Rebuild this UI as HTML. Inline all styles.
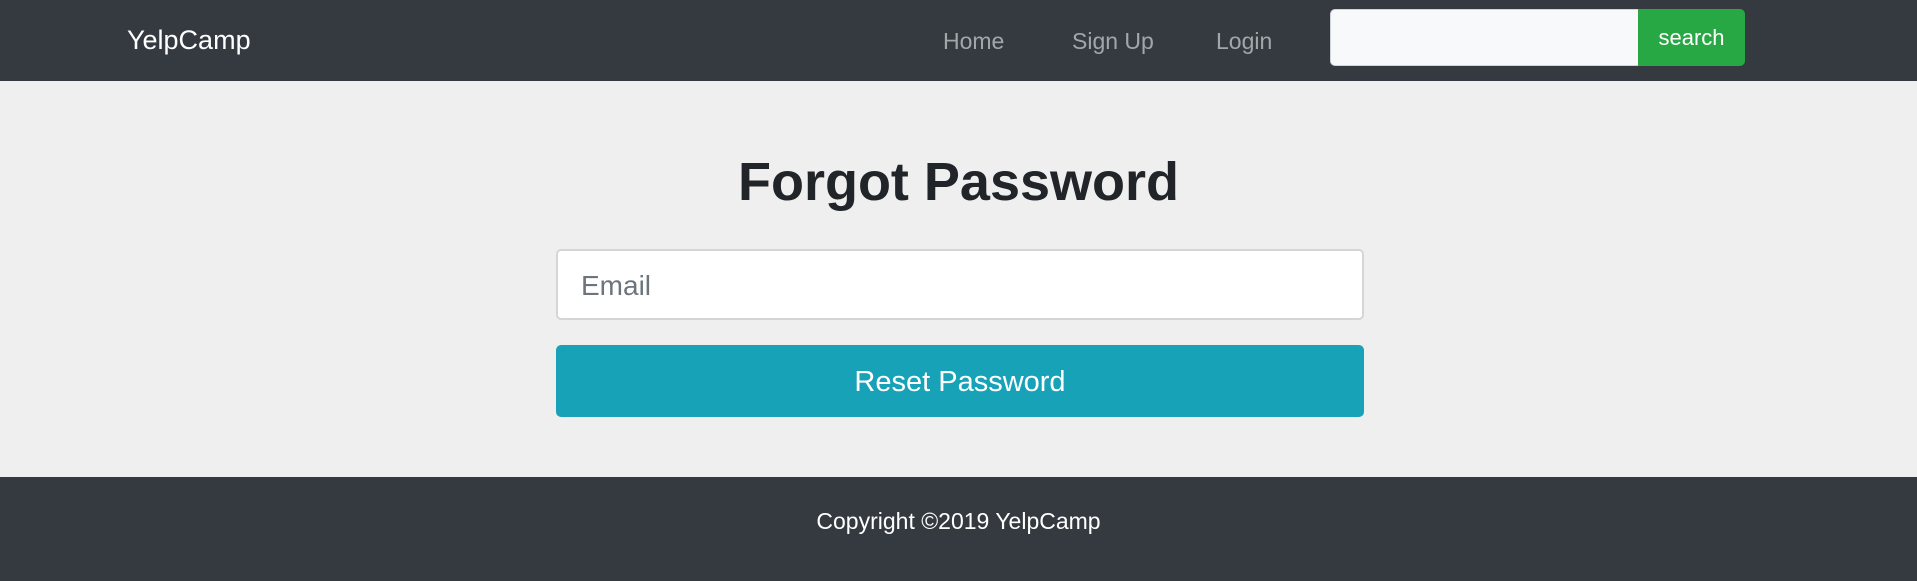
<!DOCTYPE html>
<html><head><meta charset="utf-8"><style>
*{box-sizing:border-box;margin:0;padding:0}
body{width:1917px;height:581px;overflow:hidden;background:#efefef;font-family:"Liberation Sans",sans-serif;position:relative}
.nav{position:absolute;left:0;top:0;width:1917px;height:81px;background:#343a40}
.brand{position:absolute;left:127px;top:25px;font-size:27px;color:#fff}
.link{position:absolute;top:28px;font-size:23px;color:rgba(255,255,255,.55)}
.sin{position:absolute;left:1330px;top:9px;width:309px;height:57px;background:#f8f9fa;border:1px solid #ced4da;border-radius:5px 0 0 5px}
.sbtn{position:absolute;left:1638px;top:9px;width:107px;height:57px;background:#28a745;border-radius:0 5px 5px 0;color:#fff;font-size:22px;text-align:center;line-height:57px}
h1{position:absolute;left:0;width:1917px;top:151px;text-align:center;font-size:54px;font-weight:bold;color:#212529}
.email{position:absolute;left:556px;top:249px;width:808px;height:71px;background:#fff;border:2px solid #d3d5d8;border-radius:5px;font-size:28px;color:#6c757d;padding-left:23px;line-height:69px}
.btn{position:absolute;left:556px;top:345px;width:808px;height:72px;background:#17a2b8;border-radius:5px;color:#fff;font-size:29px;text-align:center;line-height:74px}
.foot{position:absolute;left:0;top:477px;width:1917px;height:104px;background:#343a40;color:#fff;font-size:23px;text-align:center;line-height:88px}
</style></head><body>
<div class="nav">
<div class="brand">YelpCamp</div>
<div class="link" style="left:943px">Home</div>
<div class="link" style="left:1072px">Sign Up</div>
<div class="link" style="left:1216px">Login</div>
<div class="sin"></div>
<div class="sbtn">search</div>
</div>
<h1>Forgot Password</h1>
<div class="email">Email</div>
<div class="btn">Reset Password</div>
<div class="foot">Copyright ©2019 YelpCamp</div>
</body></html>
